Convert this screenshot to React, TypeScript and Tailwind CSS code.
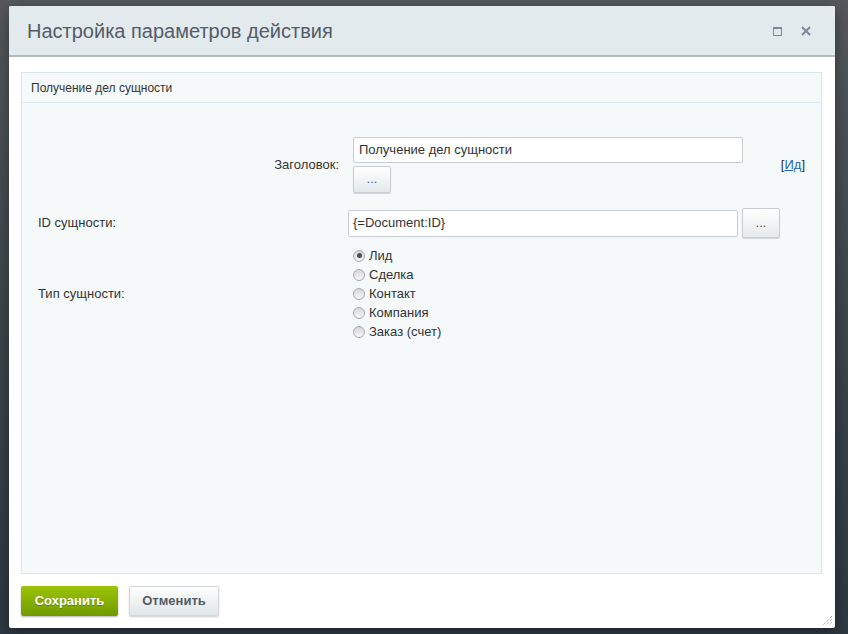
import React from 'react'

const types = ['Лид', 'Сделка', 'Контакт', 'Компания', 'Заказ (счет)']

function Radio({ checked }: { checked?: boolean }) {
  return (
    <span className="relative inline-flex h-[12px] w-[12px] shrink-0 items-center justify-center rounded-full border border-[#a9a9a9] bg-gradient-to-b from-[#d6d6d6] to-[#f7f7f7]">
      {checked && <span className="h-[5px] w-[5px] rounded-full bg-[#4d4d4d]" />}
    </span>
  )
}

function DotsButton({ className = '' }: { className?: string }) {
  return (
    <button
      className={`flex items-center justify-center rounded-[2px] border border-[#c7ced3] bg-gradient-to-b from-[#ffffff] to-[#e4e9ec] text-[13px] leading-none text-[#535c69] shadow-[0_1px_1px_rgba(0,0,0,0.15)] ${className}`}
    >
      <span className="-mt-[2px]">...</span>
    </button>
  )
}

export default function App() {
  return (
    <div className="h-[634px] w-[848px] overflow-hidden bg-gradient-to-b from-[#55595d] via-[#3f464c] to-[#2e3943] pl-[9px] pt-[6px] font-['Liberation_Sans',Arial,sans-serif]">
      <div className="relative flex h-[622px] w-[826px] flex-col overflow-hidden rounded-[2px] bg-white shadow-[0_4px_16px_rgba(0,0,0,0.4)]">
        {/* title bar */}
        <div className="flex h-[51px] shrink-0 items-center justify-between border-b-2 border-[#b4b9bd] bg-[#e3eaed] pl-[18px] pr-[24px]">
          <span className="text-[20px] text-[#535c69]">Настройка параметров действия</span>
          <div className="flex items-center gap-[19px] pt-[1px]">
            <svg width="9" height="9" viewBox="0 0 9 9">
              <rect x="0.5" y="0.5" width="8" height="8" fill="none" stroke="#7b879c" />
              <rect x="0" y="0" width="9" height="2" fill="#7b879c" />
            </svg>
            <svg width="10" height="10" viewBox="0 0 10 10">
              <path d="M1 1 L9 9 M9 1 L1 9" stroke="#7b879c" strokeWidth="2" />
            </svg>
          </div>
        </div>

        {/* content */}
        <div className="flex flex-1 flex-col px-[12px] pt-[15px]">
          <div className="flex h-[502px] w-[801px] flex-col border border-[#dbe6ec] bg-[#f5f9fa]">
            <div className="flex h-[30px] shrink-0 items-center border-b border-[#dbe6ec] pl-[9px] text-[12px] text-[#333]">
              Получение дел сущности
            </div>
            <div className="flex flex-col px-[16px] pt-[34px] text-[13px] text-[#333]">
              {/* row 1 */}
              <div className="flex items-center">
                <div className="w-[301px] text-right">Заголовок:</div>
                <div className="ml-[14px] flex w-[390px] flex-col gap-[3px]">
                  <div className="flex h-[26px] items-center rounded-[2px] border border-[#c6cdd3] bg-white pl-[5px] text-[13px] text-[#333]">
                    Получение дел сущности
                  </div>
                  <DotsButton className="h-[27px] w-[38px]" />
                </div>
                <div className="ml-auto text-[13px] text-[#333]">
                  [<a href="#" className="text-[#2067b0] underline">Ид</a>]
                </div>
              </div>

              {/* row 2 */}
              <div className="mt-[15px] flex items-center">
                <div className="w-[310px]">ID сущности:</div>
                <div className="flex h-[27px] w-[390px] items-center rounded-[2px] border border-[#c6cdd3] bg-white pl-[4px] text-[13px] text-[#333]">
                  {'{=Document:ID}'}
                </div>
                <DotsButton className="ml-[4px] h-[30px] w-[38px]" />
              </div>

              {/* row 3 */}
              <div className="mt-[8px] flex items-center">
                <div className="w-[310px]">Тип сущности:</div>
                <div className="flex flex-col pl-[5px]">
                  {types.map((t, i) => (
                    <label key={t} className="flex h-[19px] items-center gap-[4px] text-[13px] text-[#333]">
                      <Radio checked={i === 0} />
                      <span>{t}</span>
                    </label>
                  ))}
                </div>
              </div>
            </div>
          </div>

          {/* footer */}
          <div className="flex items-center gap-[11px] pt-[12px]">
            <button className="flex h-[30px] w-[97px] items-center justify-center rounded-[2px] bg-gradient-to-b from-[#9dc407] to-[#6f9a00] text-[13px] font-bold text-white shadow-[0_1px_2px_rgba(0,0,0,0.3)] [text-shadow:0_1px_0_rgba(0,0,0,0.25)]">
              Сохранить
            </button>
            <button className="flex h-[30px] w-[90px] items-center justify-center rounded-[2px] border border-[#d2d8dc] bg-gradient-to-b from-[#ffffff] to-[#dfe5e8] text-[13px] font-bold text-[#535c69] shadow-[0_1px_2px_rgba(0,0,0,0.2)]">
              Отменить
            </button>
          </div>
        </div>

        {/* resize grip */}
        <svg className="absolute bottom-[2px] right-[2px]" width="11" height="11" viewBox="0 0 11 11">
          <path d="M10 1 L1 10 M10 4 L4 10 M10 7 L7 10" stroke="#9a9a9a" strokeWidth="1" strokeDasharray="1 1" />
        </svg>
      </div>
    </div>
  )
}
